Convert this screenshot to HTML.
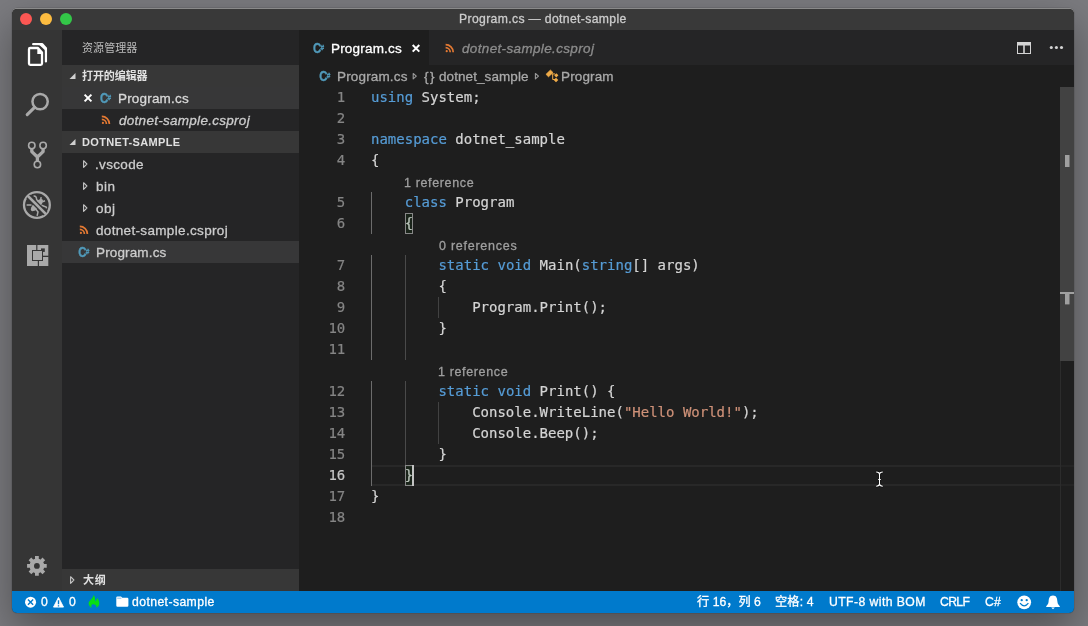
<!DOCTYPE html>
<html><head><meta charset="utf-8"><title>Program.cs — dotnet-sample</title>
<style>
*{box-sizing:border-box;margin:0;padding:0}
html,body{width:1088px;height:626px;overflow:hidden}
body{background:#7b7b7f;font-family:"Liberation Sans","Noto Sans CJK SC",sans-serif;font-size:13px;color:#ccc;position:relative}
.win{position:absolute;left:12px;top:8px;width:1062px;height:605px;border-radius:5px;overflow:hidden;background:#8a8a8a}
.inner{position:absolute;left:0;top:1px;width:1062px;height:604px;background:#1e1e1e;border-radius:5px 5px 0 0;overflow:hidden}
.shadow{position:absolute;left:12px;top:8px;width:1062px;height:605px;border-radius:5px;box-shadow:0 0 0 .5px rgba(0,0,0,.15),0 16px 40px rgba(0,0,0,.36)}
.abs{position:absolute}
.t{position:absolute;white-space:nowrap;will-change:transform;-webkit-text-stroke:.3px currentColor}
.title{left:0;top:0;width:1062px;height:21px;background:#393939}
.act{left:0;top:21px;width:50px;height:561px;background:#353535}
.side{left:50px;top:21px;width:237px;height:561px;background:#252526}
.hdr{position:absolute;left:50px;width:237px;height:22px;background:#373737}
.sel{position:absolute;left:50px;width:237px;height:22px;background:#373738}
.tabs{left:287px;top:21px;width:775px;height:35px;background:#252526}
.tab1{left:287px;top:21px;width:130px;height:35px;background:#1e1e1e}
.status{left:0;top:582px;width:1062px;height:22px;background:#007acc}
.code{font-family:"DejaVu Sans Mono","Liberation Mono",monospace;font-size:14px;line-height:21px;white-space:pre;color:#d4d4d4;-webkit-text-stroke:.2px currentColor;will-change:transform}
.ln{position:absolute;left:286.3px;width:47px;text-align:right;color:#858585;height:21px}
.cl{position:absolute;left:359px;height:21px}
.k{color:#569cd6}.s{color:#ce9178}
.lens{font-family:"Liberation Sans",sans-serif;color:#999}
.g{position:absolute;width:1px;background:#585858}
svg{position:absolute;left:0;top:0}
</style></head><body>
<div class="shadow"></div>
<div class="win"><div class="inner">
 <div class="abs title">
  <div class="abs" style="left:8px;top:4px;width:12px;height:12px;border-radius:50%;background:#fc5753"></div>
  <div class="abs" style="left:28px;top:4px;width:12px;height:12px;border-radius:50%;background:#fdbc40"></div>
  <div class="abs" style="left:48px;top:4px;width:12px;height:12px;border-radius:50%;background:#33c748"></div>
 </div>
 <div class="abs act"></div>
 <div class="abs side"></div>
 <div class="hdr" style="top:56px"></div>
 <div class="sel" style="top:78px"></div>
 <div class="hdr" style="top:122px"></div>
 <div class="sel" style="top:232px"></div>
 <div class="hdr" style="top:560px"></div>
 <div class="abs tabs"></div>
 <div class="abs tab1"></div>
 <div class="abs code" style="left:0;top:78px;width:1062px;height:504px">
<div class="abs" style="left:360px;top:378px;width:688px;height:21px;border-top:2px solid #282828;border-bottom:2px solid #282828"></div>
<div class="ln" style="top:0px">1</div>
<div class="cl" style="top:0px"><span class="k">using</span> System;</div>
<div class="ln" style="top:21px">2</div>
<div class="ln" style="top:42px">3</div>
<div class="cl" style="top:42px"><span class="k">namespace</span> dotnet_sample</div>
<div class="ln" style="top:63px">4</div>
<div class="cl" style="top:63px">{</div>
<div class="ln" style="top:105px">5</div>
<div class="cl" style="top:105px">    <span class="k">class</span> Program</div>
<div class="ln" style="top:126px">6</div>
<div class="cl" style="top:126px">    {</div>
<div class="ln" style="top:168px">7</div>
<div class="cl" style="top:168px">        <span class="k">static</span> <span class="k">void</span> Main(<span class="k">string</span>[] args)</div>
<div class="ln" style="top:189px">8</div>
<div class="cl" style="top:189px">        {</div>
<div class="ln" style="top:210px">9</div>
<div class="cl" style="top:210px">            Program.Print();</div>
<div class="ln" style="top:231px">10</div>
<div class="cl" style="top:231px">        }</div>
<div class="ln" style="top:252px">11</div>
<div class="ln" style="top:294px">12</div>
<div class="cl" style="top:294px">        <span class="k">static</span> <span class="k">void</span> Print() {</div>
<div class="ln" style="top:315px">13</div>
<div class="cl" style="top:315px">            Console.WriteLine(<span class="s">"Hello World!"</span>);</div>
<div class="ln" style="top:336px">14</div>
<div class="cl" style="top:336px">            Console.Beep();</div>
<div class="ln" style="top:357px">15</div>
<div class="cl" style="top:357px">        }</div>
<div class="ln" style="top:378px;color:#c6c6c6">16</div>
<div class="cl" style="top:378px">    }</div>
<div class="ln" style="top:399px">17</div>
<div class="cl" style="top:399px">}</div>
<div class="ln" style="top:420px">18</div>
<div class="g" style="left:359px;top:105px;height:42px;background:#6c6c6c"></div>
<div class="g" style="left:359px;top:168px;height:105px;background:#6c6c6c"></div>
<div class="g" style="left:359px;top:294px;height:105px;background:#6c6c6c"></div>
<div class="g" style="left:393px;top:168px;height:105px;background:#4a4a4a"></div>
<div class="g" style="left:393px;top:294px;height:84px;background:#4a4a4a"></div>
<div class="g" style="left:426px;top:210px;height:21px;background:#424242"></div>
<div class="g" style="left:426px;top:315px;height:42px;background:#424242"></div>
<div class="abs" style="left:393px;top:126px;width:8.4px;height:21px;border:1px solid #888;background:rgba(0,100,0,.1)"></div>
<div class="abs" style="left:393px;top:378px;width:9.3px;height:21px;border:1px solid #888;background:rgba(0,100,0,.1)"></div>
<div class="abs" style="left:400.3px;top:378px;width:2px;height:21px;background:#c4c4c4"></div>
 </div>
 <div class="abs" style="left:1048px;top:78px;width:14px;height:274px;background:#424242"></div>
 <div class="abs" style="left:1048px;top:456px;width:14px;height:21px;border-top:2px solid #242424;border-bottom:2px solid #242424"></div>
 <div class="abs" style="left:1048px;top:352px;width:1px;height:230px;background:#2c2c2c"></div>
 <div class="abs status"></div>
<span id="l1" class="t lens" style="left:392.20px;top:163.1px;height:22px;line-height:22px;font-size:12.5px;color:#9f9f9f;letter-spacing:0.641px;font-family:'Liberation Sans',sans-serif;">1 reference</span>
<span id="l2" class="t lens" style="left:426.78px;top:226.1px;height:22px;line-height:22px;font-size:12.5px;color:#9f9f9f;letter-spacing:0.749px;font-family:'Liberation Sans',sans-serif;">0 references</span>
<span id="l3" class="t lens" style="left:425.70px;top:352.1px;height:22px;line-height:22px;font-size:12.5px;color:#9f9f9f;letter-spacing:0.641px;font-family:'Liberation Sans',sans-serif;">1 reference</span>
<span id="title" class="t" style="left:447.00px;top:-1.1px;height:22px;line-height:22px;font-size:12.2px;color:#ccc;letter-spacing:0.352px;">Program.cs — dotnet-sample</span>
<span id="exp" class="t" style="left:69.58px;top:27.8px;height:22px;line-height:22px;font-size:11px;color:#bbb;letter-spacing:0.090px;-webkit-text-stroke:0;">资源管理器</span>
<span id="open" class="t" style="left:70.46px;top:55.8px;height:22px;line-height:22px;font-size:11px;color:#e0e0e0;letter-spacing:-0.077px;font-weight:bold;-webkit-text-stroke:0;">打开的编辑器</span>
<span id="oe1" class="t" style="left:105.50px;top:78.9px;height:22px;line-height:22px;font-size:13.5px;color:#d8d8d8;letter-spacing:0.180px;">Program.cs</span>
<span id="oe2" class="t" style="left:106.50px;top:100.9px;height:22px;line-height:22px;font-size:13.5px;color:#ccc;letter-spacing:0.280px;font-style:italic;">dotnet-sample.csproj</span>
<span id="proj" class="t" style="left:69.70px;top:122.1px;height:22px;line-height:22px;font-size:11px;color:#e0e0e0;letter-spacing:0.332px;font-weight:bold;-webkit-text-stroke:0;">DOTNET-SAMPLE</span>
<span id="f1" class="t" style="left:83.00px;top:144.9px;height:22px;line-height:22px;font-size:13.5px;color:#ccc;letter-spacing:0.342px;">.vscode</span>
<span id="f2" class="t" style="left:83.52px;top:166.9px;height:22px;line-height:22px;font-size:13.5px;color:#ccc;letter-spacing:0.538px;">bin</span>
<span id="f3" class="t" style="left:84.00px;top:188.9px;height:22px;line-height:22px;font-size:13.5px;color:#ccc;letter-spacing:0.468px;">obj</span>
<span id="f4" class="t" style="left:84.00px;top:210.9px;height:22px;line-height:22px;font-size:13.5px;color:#ccc;letter-spacing:0.333px;">dotnet-sample.csproj</span>
<span id="f5" class="t" style="left:84.00px;top:232.9px;height:22px;line-height:22px;font-size:13.5px;color:#ccc;letter-spacing:0.140px;">Program.cs</span>
<span id="outline" class="t" style="left:70.58px;top:559.8px;height:22px;line-height:22px;font-size:11px;color:#e0e0e0;letter-spacing:0.738px;font-weight:bold;-webkit-text-stroke:0;">大纲</span>
<span id="tab1" class="t" style="left:319.00px;top:28.9px;height:22px;line-height:22px;font-size:13.5px;color:#fff;letter-spacing:0.186px;">Program.cs</span>
<span id="tab2" class="t" style="left:449.76px;top:28.9px;height:22px;line-height:22px;font-size:13.5px;color:#8c8c8c;letter-spacing:0.348px;font-style:italic;">dotnet-sample.csproj</span>
<span id="bc1" class="t" style="left:324.50px;top:56.9px;height:22px;line-height:22px;font-size:13.5px;color:#a9a9a9;letter-spacing:0.156px;">Program.cs</span>
<span id="bc2a" class="t" style="left:412.00px;top:56.9px;height:22px;line-height:22px;font-size:13.5px;color:#a9a9a9;letter-spacing:-1.147px;">{ }</span>
<span id="bc2" class="t" style="left:427.44px;top:56.9px;height:22px;line-height:22px;font-size:13.5px;color:#a9a9a9;letter-spacing:0.076px;">dotnet_sample</span>
<span id="bc3" class="t" style="left:549.00px;top:56.9px;height:22px;line-height:22px;font-size:13.5px;color:#a9a9a9;letter-spacing:0.134px;">Program</span>
<span id="s1" class="t" style="left:28.50px;top:582.2px;height:22px;line-height:22px;font-size:12.2px;color:#fff;letter-spacing:0.000px;">0</span>
<span id="s2" class="t" style="left:57.00px;top:582.2px;height:22px;line-height:22px;font-size:12.2px;color:#fff;letter-spacing:0.000px;">0</span>
<span id="s3" class="t" style="left:119.50px;top:582.2px;height:22px;line-height:22px;font-size:12.2px;color:#fff;letter-spacing:0.423px;">dotnet-sample</span>
<span id="s4" class="t" style="left:685.00px;top:582.2px;height:22px;line-height:22px;font-size:12.2px;color:#fff;letter-spacing:0.032px;">行 16，列 6</span>
<span id="s5" class="t" style="left:763.12px;top:582.2px;height:22px;line-height:22px;font-size:12.2px;color:#fff;letter-spacing:0.166px;">空格: 4</span>
<span id="s6" class="t" style="left:817.00px;top:582.2px;height:22px;line-height:22px;font-size:12.2px;color:#fff;letter-spacing:0.436px;">UTF-8 with BOM</span>
<span id="s7" class="t" style="left:927.64px;top:582.2px;height:22px;line-height:22px;font-size:12.2px;color:#fff;letter-spacing:-0.667px;">CRLF</span>
<span id="s8" class="t" style="left:972.64px;top:582.2px;height:22px;line-height:22px;font-size:12.2px;color:#fff;letter-spacing:0.246px;">C#</span>
 <svg width="1062" height="604" viewBox="12 9 1062 604">
<g fill="none" stroke="#fff" stroke-width="2.3" stroke-linejoin="round"><path d="M33.2,44.2 H42.3 L45.9,48.2 V61.4" stroke-linecap="round"/><path d="M38.5,44.2 H42.3 L45.9,48.2 V51 Z" fill="#fff" stroke="none"/><path d="M30.2,48 H38 L42,52.4 V63.6 Q42,64.9 40.7,64.9 H30.2 Q29,64.9 29,63.6 V49.3 Q29,48 30.2,48 Z" stroke="#353535" stroke-width="4.6" fill="#353535"/><path d="M30.2,48 H38 L42,52.4 V63.6 Q42,64.9 40.7,64.9 H30.2 Q29,64.9 29,63.6 V49.3 Q29,48 30.2,48 Z"/><path d="M37.3,48 V54 H42 L42,52.4 L38,48 Z" fill="#fff" stroke="none"/></g>
<g fill="none" stroke="#a9a9a9"><circle cx="40.1" cy="101.6" r="7.65" stroke-width="2.5"/><path d="M34.6,107.4 L27.2,114.6" stroke-width="3.1" stroke-linecap="round"/></g>
<g fill="none" stroke="#a9a9a9"><path d="M31.8,149 V151.6 L37.4,157 V161 M43.1,149 V151.6 L37.4,157" stroke-width="3.3" stroke-linejoin="round"/><circle cx="31.8" cy="145.5" r="3.2" stroke-width="1.6" fill="#353535"/><circle cx="43.1" cy="145.5" r="3.2" stroke-width="1.6" fill="#353535"/><circle cx="37.4" cy="164.5" r="3.2" stroke-width="1.6" fill="#353535"/></g>
<g fill="none" stroke="#a9a9a9"><circle cx="36.9" cy="205" r="12.9" stroke-width="2.3"/><ellipse cx="36.9" cy="205.1" rx="3.3" ry="8" transform="rotate(45 36.9 205.1)" fill="#a9a9a9" stroke="none"/><path d="M33.6,195.9 Q36.6,195.6 36.6,199.6 L38,201 M41.2,197.2 L40.6,200 M45,200.8 L42.4,201.8 M41.5,205.3 L46.2,207 L46.6,208.4 M26.6,204.9 H31.5 M36,209.4 L38,212 L37.1,215.8" stroke-width="1.5"/><path d="M28.2,196.3 L45.6,213.7" stroke="#353535" stroke-width="5.4"/><path d="M27.8,195.9 L46,214.1" stroke-width="2.7"/></g>
<g><rect x="27" y="245" width="21.3" height="21" fill="#a9a9a9"/><rect x="32" y="250" width="11" height="11" fill="#353535"/><rect x="41" y="248.4" width="3.8" height="3.5" fill="#353535"/><rect x="33" y="251" width="9" height="9" fill="#a9a9a9"/><rect x="36.2" y="244.5" width="1.2" height="5.6" fill="#353535"/><rect x="37.8" y="260.9" width="1.2" height="5.6" fill="#353535"/><rect x="42.9" y="255.7" width="5.9" height="1.3" fill="#353535"/></g>
<path d="M34.98,558.96 L35.01,556.08 L38.79,556.08 L38.82,558.96 L40.45,559.64 L42.51,557.62 L45.18,560.29 L43.16,562.35 L43.84,563.98 L46.72,564.01 L46.72,567.79 L43.84,567.82 L43.16,569.45 L45.18,571.51 L42.51,574.18 L40.45,572.16 L38.82,572.84 L38.79,575.72 L35.01,575.72 L34.98,572.84 L33.35,572.16 L31.29,574.18 L28.62,571.51 L30.64,569.45 L29.96,567.82 L27.08,567.79 L27.08,564.01 L29.96,563.98 L30.64,562.35 L28.62,560.29 L31.29,557.62 L33.35,559.64 Z" fill="#a9a9a9"/><circle cx="36.9" cy="565.9" r="7.2" fill="#a9a9a9"/><circle cx="36.9" cy="565.9" r="2.9" fill="#353535"/>
<path d="M75.50,73.00 V79.00 H69.50 Z" fill="#d0d0d0"/>
<path d="M75.50,139.00 V145.00 H69.50 Z" fill="#d0d0d0"/>
<path d="M70.60,576.70 L73.90,580.00 L70.60,583.30 Z" fill="none" stroke="#c5c5c5" stroke-width="1.1" stroke-linejoin="round"/>
<path d="M84.6,94.6 L91.4,101.4 M91.4,94.6 L84.6,101.4" stroke="#fff" stroke-width="2" fill="none"/>
<g fill="#519aba" font-family="Liberation Sans,sans-serif" font-weight="bold"><text transform="translate(100.00,102.95) scale(.8,1)" font-size="14.2" stroke="#519aba" stroke-width=".4">C</text><text x="107.60" y="100.00" font-size="6.4" stroke="#519aba" stroke-width=".3">#</text></g>
<g fill="none" stroke="#e37933" stroke-width="1.7"><circle cx="102.90" cy="122.90" r="1.1" fill="#e37933" stroke="none"/><path d="M101.80,119.40 A4.6,4.6 0 0 1 106.40,124.00"/><path d="M101.80,116.40 A7.6,7.6 0 0 1 109.40,124.00"/></g>
<path d="M83.60,160.70 L86.90,164.00 L83.60,167.30 Z" fill="none" stroke="#c5c5c5" stroke-width="1.1" stroke-linejoin="round"/>
<path d="M83.60,182.70 L86.90,186.00 L83.60,189.30 Z" fill="none" stroke="#c5c5c5" stroke-width="1.1" stroke-linejoin="round"/>
<path d="M83.60,204.70 L86.90,208.00 L83.60,211.30 Z" fill="none" stroke="#c5c5c5" stroke-width="1.1" stroke-linejoin="round"/>
<g fill="none" stroke="#e37933" stroke-width="1.7"><circle cx="80.90" cy="232.90" r="1.1" fill="#e37933" stroke="none"/><path d="M79.80,229.40 A4.6,4.6 0 0 1 84.40,234.00"/><path d="M79.80,226.40 A7.6,7.6 0 0 1 87.40,234.00"/></g>
<g fill="#519aba" font-family="Liberation Sans,sans-serif" font-weight="bold"><text transform="translate(78.20,257.05) scale(.8,1)" font-size="14.2" stroke="#519aba" stroke-width=".4">C</text><text x="85.80" y="254.10" font-size="6.4" stroke="#519aba" stroke-width=".3">#</text></g>
<g fill="#519aba" font-family="Liberation Sans,sans-serif" font-weight="bold"><text transform="translate(313.00,53.05) scale(.8,1)" font-size="14.2" stroke="#519aba" stroke-width=".4">C</text><text x="320.60" y="50.10" font-size="6.4" stroke="#519aba" stroke-width=".3">#</text></g>
<path d="M412.7,45.0 L419.3,51.599999999999994 M419.3,45.0 L412.7,51.599999999999994" stroke="#fff" stroke-width="2" fill="none"/>
<g fill="none" stroke="#e37933" stroke-width="1.7"><circle cx="446.70" cy="51.20" r="1.1" fill="#e37933" stroke="none"/><path d="M445.60,47.70 A4.6,4.6 0 0 1 450.20,52.30"/><path d="M445.60,44.70 A7.6,7.6 0 0 1 453.20,52.30"/></g>
<g fill="#519aba" font-family="Liberation Sans,sans-serif" font-weight="bold"><text transform="translate(319.20,81.05) scale(.8,1)" font-size="14.2" stroke="#519aba" stroke-width=".4">C</text><text x="326.80" y="78.10" font-size="6.4" stroke="#519aba" stroke-width=".3">#</text></g>
<path d="M413.20,73.50 L416.30,76.20 L413.20,78.90 Z" fill="none" stroke="#9a9a9a" stroke-width="1.1" stroke-linejoin="round"/>
<path d="M535.40,73.50 L538.50,76.20 L535.40,78.90 Z" fill="none" stroke="#9a9a9a" stroke-width="1.1" stroke-linejoin="round"/>
<g fill="#efab48" stroke="#efab48"><path d="M550.4,69.9 L553.1,72.5 L548.5,76.9 L545.9,74.3 Z" stroke-width="0.5" stroke-linejoin="round"/><path d="M551.5,73.9 H555 M552.7,73.9 V79.5 H555" fill="none" stroke-width="1"/><path d="M556.3,73.2 L558.4,75.3 L556.3,77.4 L554.2,75.3 Z M556,77.7 L558.3,80 L556,82.3 L553.7,80 Z" stroke="none"/></g>
<g fill="none" stroke="#d4d4d4"><rect x="1017.5" y="42.5" width="13" height="11" stroke-width="1"/><path d="M1017,44 H1031" stroke-width="3"/><path d="M1024,44 V54" stroke-width="1.6"/></g>
<circle cx="1051.3" cy="47.5" r="1.55" fill="#d4d4d4"/>
<circle cx="1056.4" cy="47.5" r="1.55" fill="#d4d4d4"/>
<circle cx="1061.5" cy="47.5" r="1.55" fill="#d4d4d4"/>
<rect x="1065" y="155" width="4.5" height="12" fill="#a0a0a0"/><rect x="1060" y="292" width="14" height="2" fill="#a0a0a0"/><rect x="1065" y="294" width="4.5" height="10.4" fill="#a0a0a0"/>
<circle cx="30.55" cy="602.15" r="5.5" fill="#fff"/><path d="M27.95,599.55 L33.15,604.75 M33.15,599.55 L27.95,604.75" stroke="#007acc" stroke-width="1.4" fill="none"/>
<path d="M58.5,597.4 L63.5,607.1 H53.5 Z" fill="#fff" stroke="#fff" stroke-width="0.9" stroke-linejoin="round"/><path d="M58.5,600.2 V604.3 M58.5,605.2 V606.6" stroke="#007acc" stroke-width="1.4"/>
<path d="M93.6,595.1 C94.9,596.8 95.2,598.6 95.1,600.6 L95.6,601.5 C96.2,600.4 96.4,599.3 97.4,598.1 C98.5,599.6 99.3,601.4 99.3,603.2 C99.3,605.2 98.1,606.9 96.3,607.7 C96.7,606.6 96.5,605.6 95.4,604.9 C94.4,604.2 92.6,603.8 91.8,604.7 C91,605.7 91.2,607 91.9,608 C89.8,607.3 88.6,605.4 88.6,603.6 C88.6,600.6 92.7,599.4 93.6,595.1 Z" fill="#08de14"/>
<path d="M116.3,597.6 Q116.3,596.4 117.5,596.4 H121 L122.3,597.8 H127.2 Q128.4,597.8 128.4,599 V605.6 Q128.4,606.8 127.2,606.8 H117.5 Q116.3,606.8 116.3,605.6 Z" fill="#fff"/><path d="M117.2,598.2 H121.4" stroke="#007acc" stroke-width="0.7" opacity=".7"/>
<circle cx="1024.2" cy="602.3" r="6.9" fill="#fff"/><circle cx="1021.7" cy="600.2" r="1.15" fill="#007acc"/><circle cx="1026.7" cy="600.2" r="1.15" fill="#007acc"/><path d="M1020,603.2 Q1024.2,608.6 1028.4,603.2" fill="none" stroke="#007acc" stroke-width="1.2"/>
<path d="M1053,595.6 C1056.6,595.6 1057.2,598.6 1057.4,601.6 C1057.6,604.2 1058.6,605 1059.8,606.2 V606.9 H1046.2 V606.2 C1047.4,605 1048.4,604.2 1048.6,601.6 C1048.8,598.6 1049.4,595.6 1053,595.6 Z" fill="#fff"/><path d="M1051.2,607.6 H1054.8 L1053,609.2 Z" fill="#fff"/>
<path d="M876.2,472 Q879.5,472.1 879.5,474.4 V483.8 Q879.5,486.1 876.2,486.2 M882.8,472 Q879.5,472.1 879.5,474.4 M879.5,483.8 Q879.5,486.1 882.8,486.2" stroke="#000" stroke-width="2.6" fill="none" opacity=".7"/><path d="M876.2,472 Q879.5,472.1 879.5,474.4 V483.8 Q879.5,486.1 876.2,486.2 M882.8,472 Q879.5,472.1 879.5,474.4 M879.5,483.8 Q879.5,486.1 882.8,486.2 M878.2,479.5 H880.8" stroke="#fff" stroke-width="1.1" fill="none"/>
 </svg>
</div></div>
</body></html>
